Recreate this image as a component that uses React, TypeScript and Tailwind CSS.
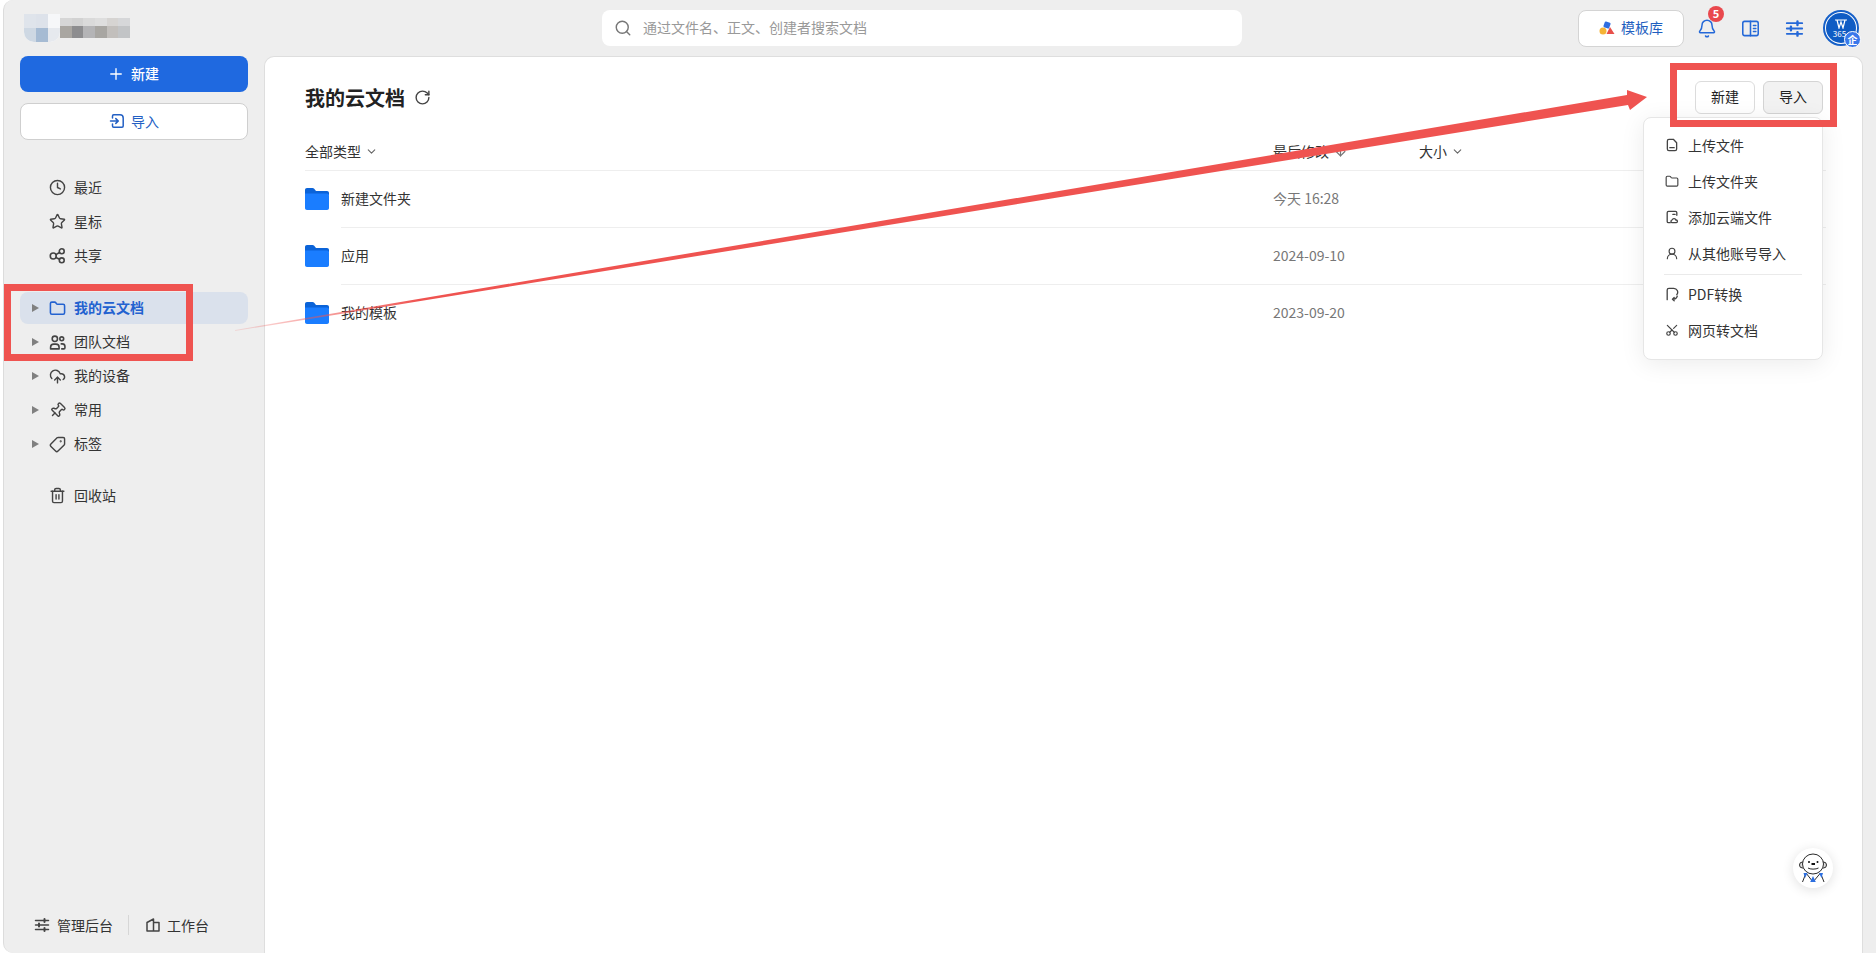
import type { ReactNode } from "react";
import { ArrowDown, Bell, ChevronDown, Clock, CloudUpload, Folder, Pin, Plus, RotateCw, Scissors, Search, Star, Tag, Trash2, UserRound } from "lucide-react";

const FONT = "font-['Noto_Sans_CJK_SC','Liberation_Sans',sans-serif]";

function Svg({ size = 16, stroke = 1.5, className, children }: { size?: number; stroke?: number; className?: string; children: ReactNode }) {
  return (
    <svg width={size} height={size} viewBox="0 0 16 16" fill="none" stroke="currentColor" strokeWidth={stroke} strokeLinecap="round" strokeLinejoin="round" className={className}>
      {children}
    </svg>
  );
}

function ImportIcon() {
  return (
    <Svg size={16}>
      <path d="M3.500 5V3c0-.7.5-1.200 1.200-1.200H11c1.800 0 3.200 1.400 3.200 3.200v8c0 .7-.5 1.200-1.200 1.200H4.700c-.7 0-1.200-.5-1.200-1.200v-2" />
      <path d="M1.500 8H9M6.800 5.600 9.300 8l-2.500 2.400" />
    </Svg>
  );
}

function SlidersIcon({ size = 16 }: { size?: number }) {
  return (
    <Svg size={size}>
      <path d="M1.500 3.500h13M1.500 8h13M1.500 12.500h13" />
      <path d="M10.500 2v3M5 6.500v3M10.500 11v3" strokeWidth={2} />
    </Svg>
  );
}

function ShareIcon() {
  return (
    <Svg size={17}>
      <circle cx="4" cy="8.500" r="2.800" />
      <circle cx="12" cy="4" r="2.300" />
      <circle cx="12" cy="12.500" r="2.300" />
      <path d="M6.500 7.200 9.900 5.200M6.500 9.800l3.400 1.700" />
    </Svg>
  );
}

function TeamIcon() {
  return (
    <Svg size={17}>
      <circle cx="5.500" cy="4.500" r="2.500" />
      <circle cx="12" cy="4.500" r="1.800" />
      <path d="M1.500 14v-1.500c0-2 1.500-3 3-3h2c1.500 0 3 1 3 3V14z" />
      <path d="M11.500 9.300h1c1.500 0 2.500 1 2.500 2.500V13c0 .6-.4 1-1 1h-2" />
    </Svg>
  );
}

function FileIcon() {
  return (
    <Svg>
      <path d="M9.500 1.500H4.500c-1 0-1.800.8-1.800 1.800v9.400c0 1 .8 1.800 1.800 1.800h7c1 0 1.800-.8 1.800-1.800V5.500z" />
      <path d="M5.500 11h5" />
    </Svg>
  );
}

function CloudFileIcon() {
  return (
    <Svg>
      <path d="M6 14.500H4c-1 0-1.500-.6-1.500-1.500V3c0-1 .5-1.500 1.500-1.500h8c1 0 1.500.5 1.500 1.500v3" />
      <path d="M9 5h2.500" />
      <path d="M8 14.500a1.700 1.700 0 0 1 .2-3.300 2.200 2.200 0 0 1 4.200.3 1.500 1.500 0 0 1 .6 3z" />
    </Svg>
  );
}

function PdfIcon() {
  return (
    <Svg>
      <path d="M2.500 14.500V3.500c0-1.200.8-2 2-2h5.500a4.500 4.500 0 0 1 3.500 7.300" />
      <path d="M14 10.500c-.8 2.300-2.800 3.500-5.500 3.500M8.500 14l2-2M8.500 14l2 1.800" />
    </Svg>
  );
}

function WorkbenchIcon() {
  return (
    <Svg size={16}>
      <path d="M2 14V5.500L8.500 2v12M8.500 5.500H14V14H2" />
    </Svg>
  );
}

function FolderFill() {
  return (
    <svg width="24" height="24" viewBox="0 0 24 24">
      <path d="M0 3c0-1.200.8-2 2-2h5.500c.7 0 1.300.3 1.700.8L11 4h11c1.200 0 2 .8 2 2v2H0z" fill="#0b63d8" />
      <path d="M0 6.500h22c1.200 0 2 .8 2 2V21c0 1.200-.8 2-2 2H2c-1.200 0-2-.8-2-2z" fill="#1a7dff" />
    </svg>
  );
}

function Mascot() {
  return (
    <svg width="40" height="40" viewBox="0 0 40 40" fill="none" stroke="#2b2b2b" strokeWidth={1}>
      <circle cx="9.500" cy="17" r="3" fill="#ddd" />
      <circle cx="30.500" cy="17" r="3" fill="#ddd" />
      <ellipse cx="20" cy="16" rx="10.500" ry="10" fill="#fff" />
      <circle cx="16" cy="14" r="1" fill="#111" stroke="none" />
      <circle cx="24.500" cy="14" r="1" fill="#111" stroke="none" />
      <rect x="18.500" y="15" width="3.500" height="2" fill="#111" stroke="none" />
      <path d="M15 20c2 1.500 8 1.500 10.500 0" />
      <path d="M9.500 34l3.500-9 7 9M31 34l-3.500-9-7.500 9" fill="#fff" />
      <path d="M10.500 25l4 0-2.500 5zM30 25l-4 0 2.500 5zM20 28l2.800 6h-5.600z" fill="#2d6fe0" stroke="none" />
    </svg>
  );
}

const TOP_NAV = [
  { label: "最近", icon: <Clock size={17} strokeWidth={2} /> },
  { label: "星标", icon: <Star size={17} strokeWidth={2} /> },
  { label: "共享", icon: <ShareIcon /> },
];

const TREE_NAV = [
  { label: "团队文档", icon: <TeamIcon /> },
  { label: "我的设备", icon: <CloudUpload size={17} strokeWidth={2} /> },
  { label: "常用", icon: <Pin size={17} strokeWidth={2} className="rotate-45" /> },
  { label: "标签", icon: <Tag size={17} strokeWidth={2} className="rotate-90" /> },
];

const FILES = [
  { name: "新建文件夹", date: "今天 16:28" },
  { name: "应用", date: "2024-09-10" },
  { name: "我的模板", date: "2023-09-20" },
];

const MENU_TOP = [
  { label: "上传文件", icon: <FileIcon /> },
  { label: "上传文件夹", icon: <Folder size={17} strokeWidth={2} /> },
  { label: "添加云端文件", icon: <CloudFileIcon /> },
  { label: "从其他账号导入", icon: <UserRound size={17} strokeWidth={2} /> },
];

const MENU_BOTTOM = [
  { label: "PDF转换", icon: <PdfIcon /> },
  { label: "网页转文档", icon: <Scissors size={18} strokeWidth={2} className="-rotate-90" /> },
];

const MOSAIC = ["#d6d6d6", "#d2d2d2", "#dadada", "#dedede", "#d6d4d2", "#d6d7d9", "#a9a6a1", "#8d8d8f", "#b4b4b6", "#a8a6a2", "#c2bfbc", "#c2c4c6"];

function Caret() {
  return <span className="mr-[10px] h-0 w-0 border-y-[4px] border-l-[7px] border-y-transparent border-l-[#808080]" />;
}

function MenuRow({ label, icon }: { label: string; icon: ReactNode }) {
  return (
    <div className="flex h-[36px] items-center gap-[9px] pb-[2px] pl-[21px] text-[14px] text-[#333]">
      <span className="flex w-[14px] justify-center text-[#444]">{icon}</span>
      {label}
    </div>
  );
}

export default function App() {
  return (
    <div className={`relative h-screen overflow-hidden bg-white pl-[3px] ${FONT}`}>
      <div className="flex h-full flex-col rounded-l-[10px] border-l border-[#dcdcdc] bg-[#eeeeee]">
        <header className="flex h-[56px] shrink-0 items-center">
          <div className="flex w-[598px] items-center pl-[20px]">
            <div className="grid h-[28px] w-[36px] grid-cols-3 grid-rows-2 overflow-hidden rounded-b-[10px] bg-white">
              <span className="bg-[#dfe4eb]" />
              <span className="bg-[#dde2ea]" />
              <span className="bg-[#f6f7f9]" />
              <span className="bg-[#ced8e3]" />
              <span className="bg-[#a6bbd3]" />
              <span className="bg-[#e6e9ee]" />
            </div>
            <div className="grid h-[20px] w-[70px] grid-cols-6 grid-rows-[8px_12px]">
              {MOSAIC.map((c, i) => (
                <span key={i} style={{ backgroundColor: c }} />
              ))}
            </div>
          </div>
          <div className="flex h-[36px] w-[640px] items-center rounded-lg bg-white pl-[12px] text-[14px] text-[#999]">
            <Search size={18} strokeWidth={1.900} className="text-[#777]" />
            <span className="ml-[11px] pb-[2px]">通过文件名、正文、创建者搜索文档</span>
          </div>
          <div className="ml-auto flex items-center pr-[17px]">
            <div className="flex h-[37px] w-[106px] items-center justify-center gap-[6px] rounded-lg border border-[#d4d4d4] bg-white pb-[2px] text-[14px] text-[#1f5fbf]">
              <svg width="16" height="14" viewBox="0 0 16 14" className="mt-[2px]">
                <circle cx="4" cy="10" r="3.500" fill="#f5b335" />
                <rect x="5" y="1" width="6" height="6" rx="1" fill="#2f6de0" transform="rotate(20 8 4)" />
                <path d="M11 6l4.500 7h-8z" fill="#e8504a" />
              </svg>
              模板库
            </div>
            <div className="relative ml-[13px] flex w-[20px] justify-center text-[#2468d8]">
              <Bell size={21} strokeWidth={1.800} />
              <span className="absolute -top-[12px] left-[11px] flex h-[16px] w-[16px] items-center justify-center rounded-full bg-[#e9484d] text-[11px] font-bold text-white">5</span>
            </div>
            <span className="ml-[24px] text-[#2468d8]">
              <Svg size={19} stroke={1.300}>
                <rect x="1.500" y="2" width="13" height="12" rx="1.500" />
                <path d="M8 2v12M10.500 5.500h2M10.500 8h2M10.500 10.500h2" />
              </Svg>
            </span>
            <span className="ml-[25px] text-[#2468d8]">
              <SlidersIcon size={19} />
            </span>
            <div className="relative ml-[19px] flex h-[36px] w-[36px] items-center justify-center rounded-full border-2 border-[#1660c8] bg-white">
              <div className="flex h-[30px] w-[30px] flex-col items-center justify-center rounded-full bg-[#0f5cc4] text-white">
                <svg width="14" height="10" viewBox="0 0 14 10" fill="none" stroke="#fff" strokeWidth={1.200}>
                  <path d="M1 1h12M3 1l2 8 2-6 2 6 2-8" />
                </svg>
                <span className="mr-[3px] text-[8px] leading-[9px]">365</span>
              </div>
              <span className="absolute -right-[4px] -bottom-[4px] flex h-[17px] w-[17px] items-center justify-center rounded-full border border-white bg-[#3a78ea] text-[10px] font-bold text-white">企</span>
            </div>
          </div>
        </header>

        <div className="flex min-h-0 flex-1">
          <aside className="flex w-[260px] shrink-0 flex-col pr-[16px] pl-[16px]">
            <div className="flex h-[36px] items-center justify-center gap-[6px] rounded-lg bg-[#1f69e0] pr-[2px] pb-[2px] text-[14px] font-medium text-white">
              <Plus size={18} strokeWidth={1.800} className="mt-[2px]" />
              新建
            </div>
            <div className="mt-[11px] flex h-[37px] items-center justify-center gap-[6px] rounded-lg border border-[#cfcfcf] bg-white pb-[1px] text-[14px] text-[#2360c4]">
              <ImportIcon />
              导入
            </div>

            <nav className="mt-[30px] text-[14px] text-[#333]">
              {TOP_NAV.map((item) => (
                <div key={item.label} className="flex h-[34px] items-center gap-[8px] pl-[29px]">
                  <span className="text-[#444]">{item.icon}</span>
                  {item.label}
                </div>
              ))}
            </nav>

            <nav className="mt-[19px] text-[14px] text-[#333]">
              <div className="my-[1px] flex h-[32px] items-center rounded-lg bg-[#dae1ec] pl-[12px] font-bold text-[#2362d0]">
                <Caret />
                <Folder size={17} strokeWidth={2.200} className="mr-[8px]" />
                <span className="pb-[1px]">我的云文档</span>
              </div>
              {TREE_NAV.map((item) => (
                <div key={item.label} className="flex h-[34px] items-center pl-[12px]">
                  <Caret />
                  <span className="mr-[8px] text-[#444]">{item.icon}</span>
                  <span className="pb-[1px]">{item.label}</span>
                </div>
              ))}
            </nav>

            <div className="mt-[18px] flex h-[34px] items-center gap-[8px] pb-[1px] pl-[29px] text-[14px] text-[#333]">
              <Trash2 size={17} strokeWidth={2} className="text-[#444]" />
              回收站
            </div>

            <footer className="mt-auto mb-[18px] flex h-[20px] items-center pl-[14px] text-[14px] text-[#333]">
              <span className="mr-[7px] text-[#444]">
                <SlidersIcon size={16} />
              </span>
              管理后台
              <span className="mr-[16px] ml-[15px] h-[20px] w-px bg-[#d6d6d6]" />
              <span className="mr-[6px] text-[#444]">
                <WorkbenchIcon />
              </span>
              工作台
            </footer>
          </aside>

          <main className="relative mr-[13px] flex-1 rounded-t-[10px] border border-b-0 border-[#dedede] bg-white pl-[40px]">
            <div className="flex h-[66px] items-end gap-[9px] pb-[11px]">
              <h1 className="text-[20px] leading-[28px] font-bold text-[#222]">我的云文档</h1>
              <RotateCw size={17} strokeWidth={2} className="mb-[6px] text-[#444]" />
            </div>

            <div className="mr-[36px] flex h-[48px] items-end border-b border-[#eeeeee] pb-[8px] text-[14px] text-[#333]">
              <span className="flex w-[968px] items-center gap-[4px]">
                全部类型
                <ChevronDown size={13} className="text-[#666]" />
              </span>
              <span className="flex w-[146px] items-center gap-[4px]">
                最后修改
                <ArrowDown size={15} className="text-[#777]" />
              </span>
              <span className="flex items-center gap-[4px]">
                大小
                <ChevronDown size={13} className="text-[#666]" />
              </span>
            </div>

            <div className="mr-[36px]">
              {FILES.map((f, i) => (
                <div key={f.name} className="flex h-[57px] items-center pb-[2px]">
                  <FolderFill />
                  <div className={`-mb-[2px] ml-[12px] flex h-[57px] flex-1 items-center pb-[2px] text-[14px] text-[#333] ${i < 2 ? "border-b border-[#eeeeee]" : ""}`}>
                    <span className="w-[932px]">{f.name}</span>
                    <span className="text-[14px] text-[#777]">{f.date}</span>
                  </div>
                </div>
              ))}
            </div>

            <div className="absolute top-[24px] right-[39px] flex gap-[8px] text-[14px] text-[#222]">
              <span className="flex h-[33px] w-[60px] items-center justify-center rounded-md border border-[#dcdcdc] bg-white pb-[2px]">新建</span>
              <span className="flex h-[33px] w-[60px] items-center justify-center rounded-md border border-[#d4d4d4] bg-[#f2f2f2] pb-[2px]">导入</span>
            </div>

            <div className="absolute top-[60px] right-[39px] h-[243px] w-[180px] rounded-lg border border-[#e6e6e6] bg-white py-[10px] shadow-[0_4px_24px_rgba(0,0,0,0.08)]">
              {MENU_TOP.map((m) => (
                <MenuRow key={m.label} {...m} />
              ))}
              <div className="mx-[20px] my-[2px] h-px bg-[#eaeaea]" />
              <div className="mt-[2px]">
                {MENU_BOTTOM.map((m) => (
                  <MenuRow key={m.label} {...m} />
                ))}
              </div>
            </div>

            <div className="absolute right-[29px] bottom-[65px] flex h-[40px] w-[40px] items-center justify-center rounded-full bg-white shadow-[0_2px_12px_rgba(0,0,0,0.12)]">
              <Mascot />
            </div>
          </main>
        </div>
      </div>

      {/* annotations on top of the screenshot */}
      <div className="absolute top-[284px] left-[4px] h-[77px] w-[189px] border-[7px] border-[#ef5350]" />
      <div className="absolute top-[63px] left-[1670px] h-[64px] w-[167px] border-[7px] border-[#ef5350]" />
      <svg className="pointer-events-none absolute inset-0" width="1876" height="953">
        <defs>
          <linearGradient id="tail" gradientUnits="userSpaceOnUse" x1="235" y1="0" x2="420" y2="0">
            <stop offset="0" stopColor="#ef5350" stopOpacity="0.15" />
            <stop offset="1" stopColor="#ef5350" />
          </linearGradient>
        </defs>
        <polygon points="235,330 1627,95 1627,90 1647,97 1630,110 1628,105 235,331" fill="url(#tail)" />
      </svg>
    </div>
  );
}
